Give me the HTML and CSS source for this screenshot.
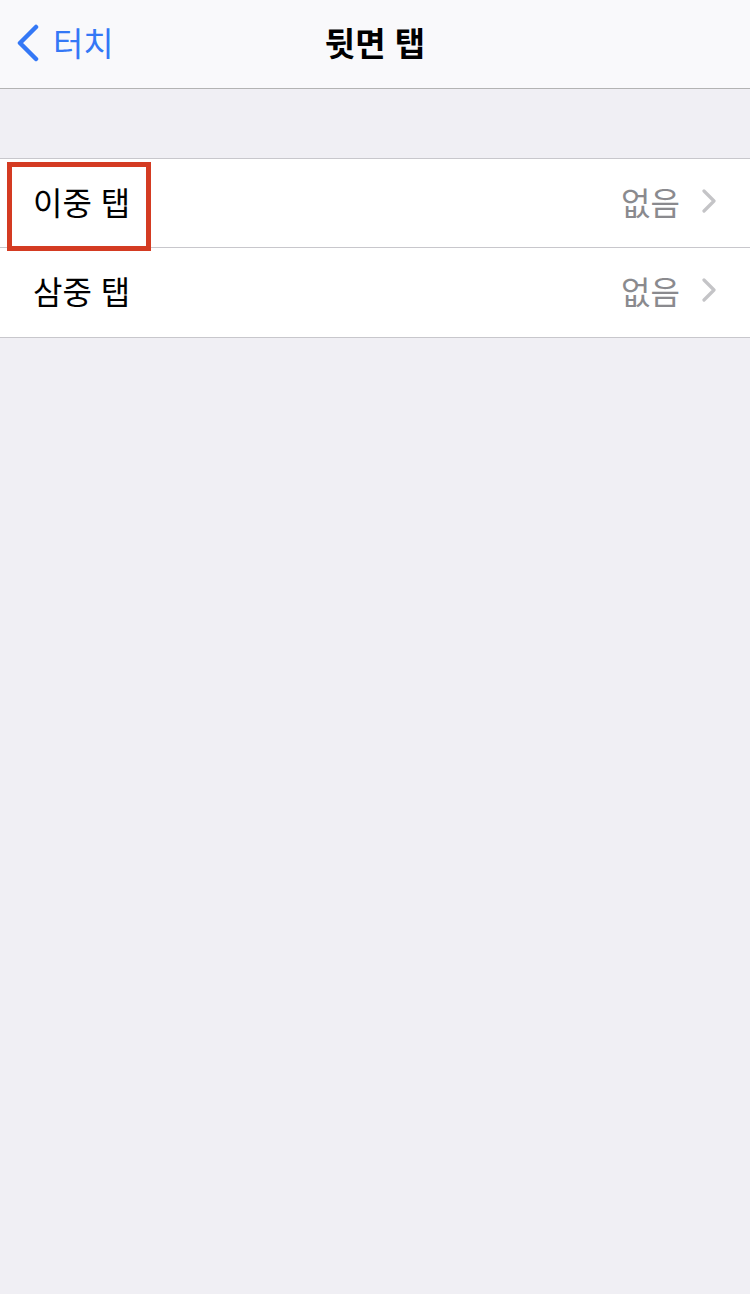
FILE: index.html
```html
<!DOCTYPE html>
<html lang="ko">
<head>
    <meta charset="UTF-8">
    <meta name="viewport" content="width=device-width, initial-scale=1.0">
    <title>뒷면 탭</title>
    <link rel="stylesheet" href="styles.css">
</head>
<body>
    <div class="navbar">
        <div class="back">
            <svg class="back-icon" width="24" height="38" viewBox="0 0 24 38">
                <path d="M20 3 L4 19 L20 35" fill="none" stroke="#3478f6" stroke-width="4.5" stroke-linecap="round" stroke-linejoin="round"/>
            </svg>
            <span>터치</span>
        </div>
        <h1>뒷면 탭</h1>
    </div>

    <div class="group">
        <div class="row">
            <span class="label">이중 탭</span>
            <span class="value">없음</span>
            <svg class="chev" width="16" height="24" viewBox="0 0 16 24">
                <path d="M3 2 L13 12 L3 22" fill="none" stroke="#c4c4c7" stroke-width="3.2" stroke-linecap="round" stroke-linejoin="round"/>
            </svg>
            <div class="mark"></div>
        </div>
        <div class="row">
            <span class="label">삼중 탭</span>
            <span class="value">없음</span>
            <svg class="chev" width="16" height="24" viewBox="0 0 16 24">
                <path d="M3 2 L13 12 L3 22" fill="none" stroke="#c4c4c7" stroke-width="3.2" stroke-linecap="round" stroke-linejoin="round"/>
            </svg>
        </div>
    </div>
</body>
</html>
```

FILE: styles.css
```css
body{
    margin: 0;
    background: #f0eff4;
    font-family: "Noto Sans CJK KR", "Noto Sans", sans-serif;
    color: #000;
}
.navbar{
    position: relative;
    height: 88px;
    background: #f9f9fb;
    border-bottom: 1px solid #b3b3b3;
    display: flex;
    align-items: center;
    justify-content: center;
}
.navbar h1{
    margin: 0 0 4px 0;
    font-size: 33px;
    font-weight: 700;
}
.back{
    position: absolute;
    left: 16px;
    top: 0;
    height: 88px;
    display: flex;
    align-items: center;
    gap: 13px;
    color: #3478f6;
    font-size: 33px;
}
.back span{
    margin-bottom: 4px;
}
.back-icon{
    margin-top: -2px;
}
.group{
    margin-top: 69px;
    background: #fff;
    border-top: 1px solid #c8c7cc;
    border-bottom: 1px solid #c8c7cc;
}
.row{
    position: relative;
    box-sizing: border-box;
    height: 88px;
    display: flex;
    align-items: center;
    padding: 0 33px 5px 33px;
}
.row + .row{
    height: 90px;
    border-top: 1px solid #c8c7cc;
}
.label{
    flex: 1;
    font-size: 32px;
}
.value{
    font-size: 32px;
    color: #8a8a8e;
    margin-right: 21px;
}
.chev{
    display: block;
}
.mark{
    position: absolute;
    left: 7px;
    top: 3px;
    width: 134px;
    height: 79px;
    border: 5px solid #d43b22;
    z-index: 2;
}
```
